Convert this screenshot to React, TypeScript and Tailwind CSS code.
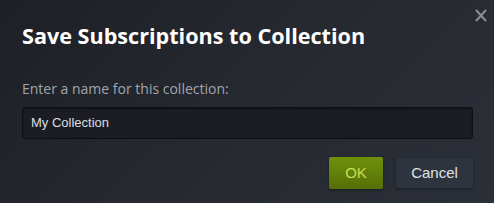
export default function App() {
  return (
    <div className="relative w-[494px] h-[203px] overflow-hidden bg-[linear-gradient(135deg,#1e2026_0%,#262930_50%,#2b2f37_100%)] font-['Open_Sans','Liberation_Sans',sans-serif]">
      {/* close */}
      <button className="absolute right-[7px] top-[9px] w-[12px] h-[13px] text-[#8b8f95]">
        <svg viewBox="0 0 12 13" className="w-full h-full" fill="none" stroke="currentColor" strokeWidth="2">
          <path d="M1 1 L11 12 M11 1 L1 12" />
        </svg>
      </button>

      <div className="flex flex-col pl-[22px] pr-[21px] pt-[23px]">
        <h1 className="text-[21.6px] leading-[26px] font-bold text-white">Save Subscriptions to Collection</h1>

        <label className="mt-[31px] text-[14px] leading-[18px] text-[#a0a5ab]">Enter a name for this collection:</label>

        <div className="mt-[9px] h-[32px] rounded-[3px] border border-[#0e0f12] bg-[#1b1d22] flex items-center px-[8px] shadow-[inset_0_1px_2px_rgba(0,0,0,0.4)]">
          <span className="font-['Liberation_Sans',Arial,sans-serif] text-[13px] text-[#dcdfe2]">My Collection</span>
        </div>

        <div className="mt-[18px] flex justify-end gap-[13px]">
          <button className="w-[54px] h-[32px] rounded-[2px] bg-[linear-gradient(to_bottom,#70900c,#566f06)] font-['Liberation_Sans',Arial,sans-serif] text-[15px] text-[#c4df55] shadow-[0_1px_3px_rgba(0,0,0,0.4)]">
            OK
          </button>
          <button className="mt-[1px] w-[77px] h-[30px] rounded-[2px] bg-[#2e343d] font-['Liberation_Sans',Arial,sans-serif] text-[15px] text-[#dfe3e6] shadow-[0_1px_3px_rgba(0,0,0,0.4)]">
            Cancel
          </button>
        </div>
      </div>
    </div>
  )
}
